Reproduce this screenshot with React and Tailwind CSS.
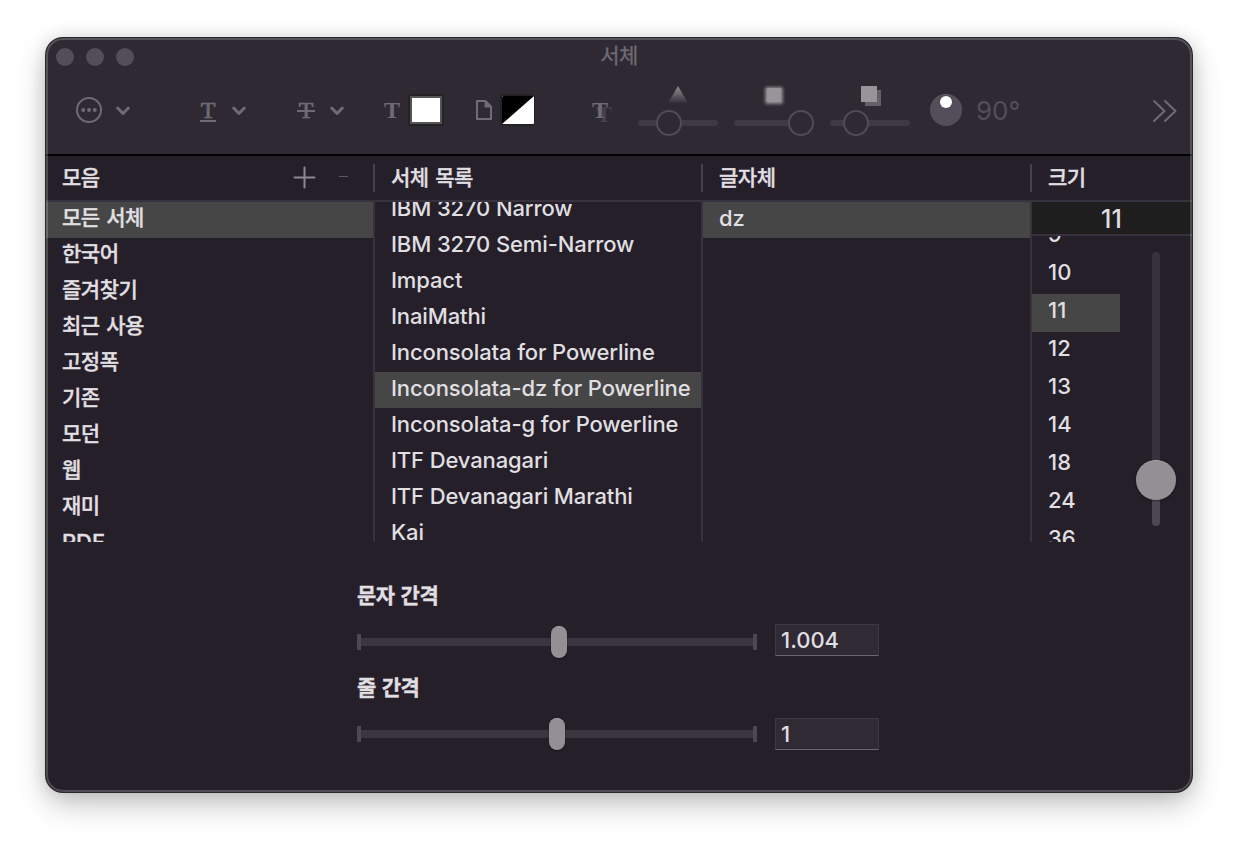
import clsx from "clsx";

const COLLECTIONS = ["모든 서체", "한국어", "즐겨찾기", "최근 사용", "고정폭", "기존", "모던", "웹", "재미", "PDF"];

const FAMILIES = [
  "IBM 3270 Narrow",
  "IBM 3270 Semi-Narrow",
  "Impact",
  "InaiMathi",
  "Inconsolata for Powerline",
  "Inconsolata-dz for Powerline",
  "Inconsolata-g for Powerline",
  "ITF Devanagari",
  "ITF Devanagari Marathi",
  "Kai",
];

const SIZES = ["9", "10", "11", "12", "13", "14", "18", "24", "36"];

// Hangul is set slightly smaller and tighter than the Latin text
const HANGUL = "text-[21px] tracking-[-0.5px] [word-spacing:1.5px] [-webkit-text-stroke:0.35px_currentColor]";

const Chevron = ({ className }) => (
  <svg viewBox="0 0 14 10" className={clsx("mt-px h-2.5 w-3.5 shrink-0", className)} fill="none" stroke="#6f6a75" strokeWidth="3" strokeLinecap="round" strokeLinejoin="round">
    <path d="M1.7 2 7 7.5 12.3 2" />
  </svg>
);

const Glyph = ({ className, children }) => (
  <span className={clsx("relative flex h-8 w-4 shrink-0 items-center justify-center font-['Liberation_Serif',serif] text-[24px] leading-8 text-[#6f6a75]", className)}>
    {children}
  </span>
);

// Small toolbar slider with its picture above
const MiniSlider = ({ knob, children }) => (
  <div className="flex h-[52px] w-20 shrink-0 flex-col justify-between">
    <svg viewBox="0 0 80 26" className="h-[26px] w-20">{children}</svg>
    <div className="relative flex h-[26px] items-center">
      <div className="h-1.5 w-full rounded-full bg-[#3e3944]" />
      <div className={clsx("absolute top-0 size-[26px] rounded-full border-2 border-[#514c57] bg-[#2e2933]", knob)} />
    </div>
  </div>
);

const Toolbar = () => (
  <div className="flex h-[72px] items-center pl-[30px]">
    <svg viewBox="0 0 26 26" className="size-[26px] shrink-0" fill="#6f6a75">
      <circle cx="13" cy="13" r="12" fill="none" stroke="#6f6a75" strokeWidth="2" />
      <circle cx="7.2" cy="13" r="2" />
      <circle cx="13" cy="13" r="2" />
      <circle cx="18.8" cy="13" r="2" />
    </svg>
    <Chevron className="ml-3.5" />

    <Glyph className="ml-[70px] [-webkit-text-stroke:0.7px_#6f6a75]">
      T<span className="absolute bottom-1 left-0 h-0.5 w-4 bg-[#6f6a75]" />
    </Glyph>
    <Chevron className="ml-4" />

    <Glyph className="ml-[52px] [-webkit-text-stroke:0.7px_#6f6a75]">
      T<span className="absolute -left-px top-4 h-0.5 w-[18px] bg-[#6f6a75]" />
    </Glyph>
    <Chevron className="ml-4" />

    <Glyph className="ml-10 font-bold">T</Glyph>
    <div className="ml-2 h-8 w-9 shrink-0 rounded-[4px] border-2 border-[#232323] bg-white">
      <div className="h-full w-full border-2 border-[#555]" />
    </div>

    <svg viewBox="0 0 16 20" className="ml-8 h-5 w-4 shrink-0" fill="none" stroke="#6f6a75" strokeWidth="2">
      <path d="M1 1H9.5L15 6.5V19H1Z" />
      <path d="M8.5 1V7.5H15Z" fill="#6f6a75" stroke="none" />
    </svg>
    <svg viewBox="0 0 35 32" className="ml-2 h-8 w-[35px] shrink-0">
      <rect width="35" height="32" rx="4" fill="#232323" />
      <rect x="2" y="2" width="32" height="28" rx="1" fill="#fff" />
      <path d="M2 30V3L3 2H34Z" fill="#000" />
    </svg>

    {/* Letter with a drop shadow */}
    <Glyph className="ml-[57px] font-bold [text-shadow:4px_4px_0_#45404b]">T</Glyph>

    <div className="ml-[30px] flex gap-4">
      <MiniSlider knob="left-[18px]">
        <defs>
          <linearGradient id="fade" x1="0" y1="0" x2="0" y2="1">
            <stop offset="0" stopColor="#929095" />
            <stop offset="1" stopColor="#34303a" />
          </linearGradient>
        </defs>
        <path d="M40 2 50 19H30Z" fill="url(#fade)" />
      </MiniSlider>
      <MiniSlider knob="left-[54px]">
        <filter id="glow" x="-50%" y="-50%" width="200%" height="200%">
          <feGaussianBlur stdDeviation="1.6" />
        </filter>
        <rect x="31" y="3" width="18" height="17" rx="2" fill="#8c8a8f" filter="url(#glow)" />
        <rect x="33" y="4" width="14" height="14" rx="1" fill="#98959a" />
      </MiniSlider>
      <MiniSlider knob="left-[13px]">
        <rect x="35" y="6" width="16" height="16" fill="#636067" />
        <rect x="31" y="2" width="16" height="16" fill="#98959a" />
      </MiniSlider>
    </div>

    <div className="ml-5 flex size-8 shrink-0 justify-center rounded-full border-t border-[#66616c] bg-[#534e59] pt-px">
      <div className="size-3 rounded-full bg-white" />
    </div>
    <span className="ml-3.5 mt-0.5 w-14 text-[26px] font-normal leading-8 text-[#534e59]">90°</span>

    <svg viewBox="0 0 26 24" className="ml-[120px] mt-0.5 h-6 w-[26px] shrink-0" fill="none" stroke="#6f6a75" strokeWidth="2" strokeLinecap="round" strokeLinejoin="round">
      <path d="M2 2 12.5 12 2 22M13 2 23.5 12 13 22" />
    </svg>
  </div>
);

const Row = ({ selected, className, children }) => (
  <li className={clsx("h-9 shrink-0 whitespace-nowrap pl-4 leading-8", selected && "bg-[#464646]", className)}>{children}</li>
);

const Heading = ({ last, children }) => (
  <div className={clsx("flex h-7 items-center border-r-2 pl-4", last ? "border-transparent" : "border-[#46414c]")}>
    {children}
  </div>
);

const SpacingRow = ({ value, knob, fieldClass }) => (
  <div className="flex h-8 items-center">
    <div className="relative flex h-8 w-[400px] items-center">
      <div className="h-4 w-1 bg-[#4c4752]" />
      <div className="h-2 flex-1 bg-[#3a353f]" />
      <div className="h-4 w-1 bg-[#4c4752]" />
      <div className={clsx("absolute top-0 h-8 w-4 rounded-full border-t border-[#a7a4a9] bg-[#929095] shadow-[0_1px_2px_rgba(0,0,0,0.4)]", knob)} />
    </div>
    <div className={clsx("ml-[18px] h-8 w-[104px] border border-[#3d3843] border-b-[#6b6671] bg-[#2f2a34] pl-[5px] leading-[30px]", fieldClass)}>
      {value}
    </div>
  </div>
);

export default function App() {
  return (
    <div className="h-[846px] w-[1238px] overflow-hidden bg-white pl-[46px] pt-[38px] font-['Inter','Noto_Sans_CJK_KR',sans-serif] text-[22px] font-medium text-[#e0dfe1]">
      <div className="relative flex h-[754px] w-[1146px] flex-col overflow-hidden rounded-[17px] bg-[#241f29] shadow-[0_0_0_1px_#29272b,0_0_18px_rgba(0,0,0,0.12),0_12px_30px_rgba(0,0,0,0.24)]">
        {/* Title bar and toolbar */}
        <header className="h-[118px] shrink-0 border-b-2 border-black bg-[#2e2933]">
          <div className="grid h-9 grid-cols-[1fr_auto_1fr] items-center">
            <div className="flex gap-3 pl-2.5 pt-0.5">
              <span className="size-[18px] rounded-full bg-[#534e59]" />
              <span className="size-[18px] rounded-full bg-[#534e59]" />
              <span className="size-[18px] rounded-full bg-[#534e59]" />
            </div>
            <h1 className={clsx(HANGUL, "font-normal text-[#6f6a75]")}>서체</h1>
          </div>
          <Toolbar />
        </header>

        {/* Column headings */}
        <div className={clsx(HANGUL, "grid h-[46px] shrink-0 grid-cols-[329px_328px_329px_160px] border-b-2 border-[#37323d] pt-2")}>
          <Heading>
            <span>모음</span>
            <svg viewBox="0 0 60 24" className="ml-auto mr-[21px] h-6 w-[60px]" fill="none">
              <path d="M2.5 11.5H22.5M12.5 1.5V21.5" stroke="#8c8991" strokeWidth="2" strokeLinecap="round" />
              <path d="M47 10.5H56" stroke="#5c5762" />
            </svg>
          </Heading>
          <Heading>서체 목록</Heading>
          <Heading>글자체</Heading>
          <Heading last>크기</Heading>
        </div>

        {/* Browser columns */}
        <div className="grid h-[340px] shrink-0 grid-cols-[329px_328px_329px_160px]">
          <ul className={clsx(HANGUL, "h-[340px] overflow-hidden border-r-2 border-[#37323d]")}>
            {COLLECTIONS.map((name, i) => (
              <Row key={name} selected={i === 0} className={clsx(name === "PDF" && "text-[22px] tracking-normal")}>{name}</Row>
            ))}
          </ul>
          <ul className="flex h-[340px] flex-col overflow-hidden border-r-2 border-[#37323d] tracking-[-0.12px]">
            {FAMILIES.map((name, i) => (
              <Row key={name} selected={i === 5} className={clsx(i === 0 && "-mt-2.5")}>{name}</Row>
            ))}
          </ul>
          <ul className="h-[340px] overflow-hidden border-r-2 border-[#37323d]">
            <Row selected>dz</Row>
          </ul>
          <div className="flex h-[340px] flex-col">
            <div className="h-[34px] shrink-0 border-b-2 border-[#37323d] bg-[#1e1e1e] pr-px text-center text-[25px] leading-[34px]">11</div>
            <div className="flex min-h-0 flex-1">
              <ul className="flex w-[88px] flex-col overflow-hidden">
                {SIZES.map((size, i) => (
                  <li key={size} className={clsx("h-[38px] shrink-0 pl-4 leading-8", size === "11" && "bg-[#464646]", i === 0 && "-mt-[18px]")}>
                    {size}
                  </li>
                ))}
              </ul>
              <div className="relative ml-4 mt-4 flex h-[274px] w-10 justify-center">
                <div className="flex h-full w-2 flex-col overflow-hidden rounded-full bg-[#37323d]">
                  <div className="mt-auto h-12 bg-[#4c4752]" />
                </div>
                <div className="absolute left-0 top-[208px] size-10 rounded-full border-t border-[#a7a4a9] bg-[#929095] shadow-[0_1px_2px_rgba(0,0,0,0.4)]" />
              </div>
            </div>
          </div>
        </div>

        {/* Spacing controls */}
        <section className="pl-[311px] pt-9">
          <h2 className={clsx(HANGUL, "h-12 font-bold leading-9")}>문자 간격</h2>
          <SpacingRow value="1.004" knob="left-[194px]" fieldClass="-mt-1" />
          <h2 className={clsx(HANGUL, "mt-3 h-12 font-bold leading-9")}>줄 간격</h2>
          <SpacingRow value="1" knob="left-[192px]" />
        </section>

        {/* Light rim drawn over the contents */}
        <div className="pointer-events-none absolute inset-0 rounded-[17px] border-2 border-white/20" />
      </div>
    </div>
  );
}
